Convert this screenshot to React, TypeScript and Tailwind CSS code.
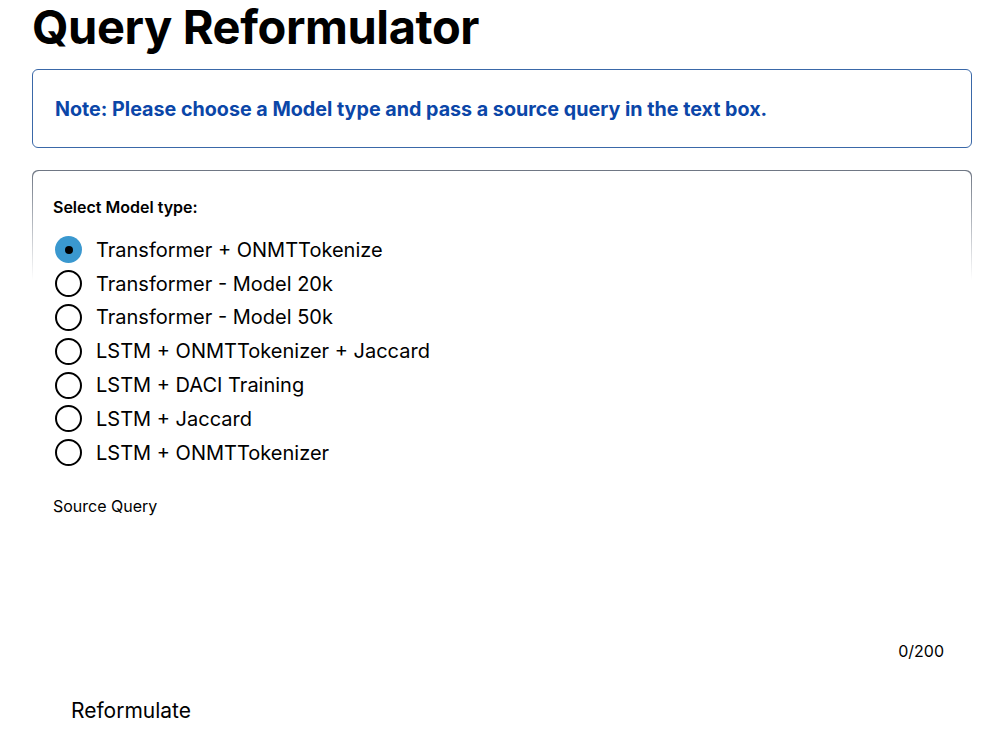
import React, { useState } from 'react';

const models = [
  'Transformer + ONMTTokenize',
  'Transformer - Model 20k',
  'Transformer - Model 50k',
  'LSTM + ONMTTokenizer + Jaccard',
  'LSTM + DACI Training',
  'LSTM + Jaccard',
  'LSTM + ONMTTokenizer',
];

export default function App() {
  const [model, setModel] = useState(models[0]);
  const [query, setQuery] = useState('');

  return (
    <div className="min-h-[750px] bg-white text-black font-['Inter',sans-serif] pl-8 pr-[28px]">
      <h1 className="text-[47px] font-bold leading-none pt-[3px] tracking-[-0.4px]">Query Reformulator</h1>

      {/* Note banner */}
      <div className="mt-[19px] h-[79px] rounded-md border border-[#3a68a8] flex items-center px-[22px]">
        <p className="text-[19.7px] font-bold text-[#0b46a8] pt-[3px]">
          Note: Please choose a Model type and pass a source query in the text box.
        </p>
      </div>

      {/* Form card, border fades out downward */}
      <div className="mt-[22px] rounded-t-md px-px pt-px bg-[linear-gradient(to_bottom,#6f7784,#ffffff00_110px)]">
        <div className="bg-white rounded-t-md pl-5 pr-[27px] pt-[24px]">
          <div className="text-[16px] font-semibold">Select Model type:</div>

          <div className="mt-[14px] flex flex-col">
            {models.map((m) => {
              const checked = m === model;
              return (
                <label key={m} className="flex items-center h-[33.8px] cursor-pointer" onClick={() => setModel(m)}>
                  <span
                    className={
                      checked
                        ? 'w-[27px] h-[27px] ml-[2px] rounded-full bg-[#3a98cf] flex items-center justify-center'
                        : 'w-[27px] h-[27px] ml-[2px] rounded-full border-2 border-black'
                    }
                  >
                    {checked && <span className="w-[8px] h-[8px] rounded-full bg-black" />}
                  </span>
                  <span className="ml-[14px] text-[20px]">{m}</span>
                </label>
              );
            })}
          </div>

          <div className="mt-[24px] text-[16px]">Source Query</div>
          <textarea
            value={query}
            maxLength={200}
            onChange={(e) => setQuery(e.target.value)}
            className="mt-2 w-full h-[107px] resize-none outline-none"
          />
          <div className="text-right text-[16px]">{query.length}/200</div>
        </div>
      </div>

      <button className="mt-[32px] ml-[39px] text-[21px]">Reformulate</button>
    </div>
  );
}
